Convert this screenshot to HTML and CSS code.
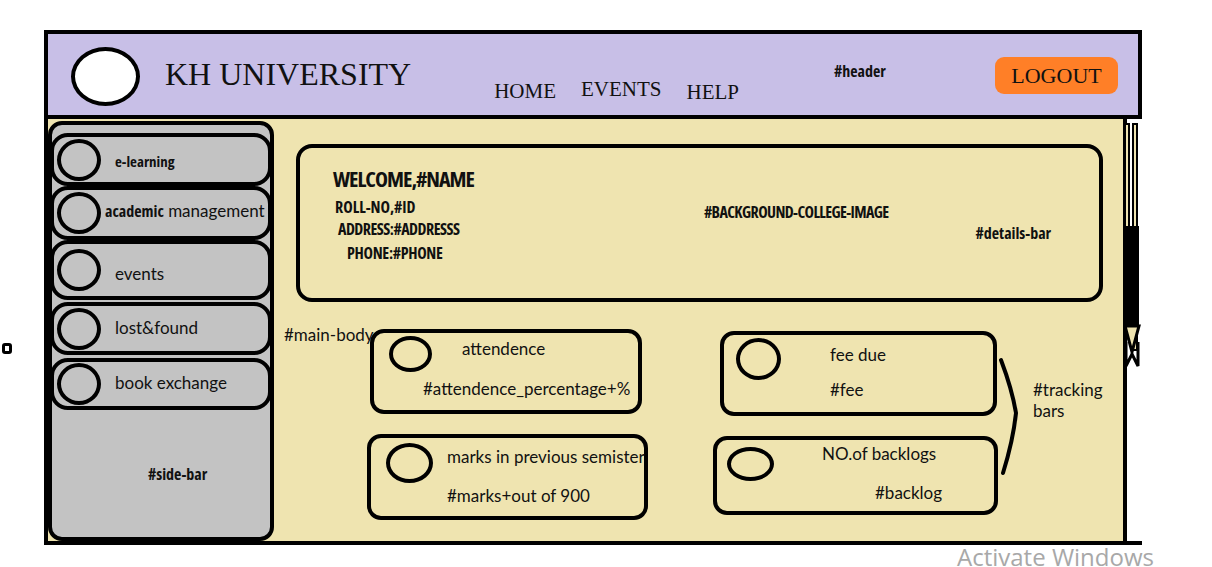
FILE: index.html
```html
<!DOCTYPE html>
<html lang="en">
<head>
  <meta charset="UTF-8">
  <meta name="viewport" content="width=device-width, initial-scale=1.0">
  <title>KH University</title>
  <link rel="stylesheet" href="styles.css">
</head>
<body>
  <div class="frame">
    <header class="header">
      <div class="logo"></div>
      <h1 class="brand">KH UNIVERSITY</h1>
      <nav class="nav">
        <a href="#" class="nav-home">HOME</a>
        <a href="#" class="nav-events">EVENTS</a>
        <a href="#" class="nav-help">HELP</a>
      </nav>
      <span class="tag tag-header">#header</span>
      <button class="logout">LOGOUT</button>
    </header>

    <div class="content">
      <aside class="sidebar">
        <ul class="side-list">
          <li class="side-item side-first"><span class="ring"></span><span class="side-label tag">e-learning</span></li>
          <li class="side-item"><span class="ring"></span><span class="side-label side-wide"><span class="tag">academic</span> management</span></li>
          <li class="side-item side-tall"><span class="ring"></span><span class="side-label">events</span></li>
          <li class="side-item side-lost"><span class="ring"></span><span class="side-label">lost&amp;found</span></li>
          <li class="side-item side-book"><span class="ring"></span><span class="side-label">book exchange</span></li>
        </ul>
        <div class="side-tag"><span class="tag">#side-bar</span></div>
      </aside>

      <main class="main">
        <section class="details">
          <div class="info">
            <div class="tag info-name">WELCOME,#NAME</div>
            <div class="tag info-line info-roll">ROLL-NO,#ID</div>
            <div class="tag info-line info-addr">ADDRESS:#ADDRESSS</div>
            <div class="tag info-line info-phone">PHONE:#PHONE</div>
          </div>
          <div class="tag bg-label">#BACKGROUND-COLLEGE-IMAGE</div>
          <div class="tag details-tag">#details-bar</div>
        </section>

        <section class="tracking">
          <div class="main-tag">#main-body</div>

          <div class="track-col">
            <div class="track-card card-att">
              <div class="track-top"><span class="ring"></span><span class="track-title">attendence</span></div>
              <div class="track-value">#attendence_percentage+%</div>
            </div>
            <div class="track-card card-marks">
              <div class="track-top"><span class="ring"></span><span class="track-title">marks in previous semister</span></div>
              <div class="track-value">#marks+out of 900</div>
            </div>
          </div>

          <div class="track-col track-col-right">
            <div class="track-card card-fee">
              <div class="track-top"><span class="ring"></span><span class="track-title">fee due</span></div>
              <div class="track-value">#fee</div>
            </div>
            <div class="track-card card-back">
              <div class="track-top"><span class="ring"></span><span class="track-title">NO.of backlogs</span></div>
              <div class="track-value">#backlog</div>
            </div>
          </div>

          <svg class="bracket" width="22" height="125" viewBox="0 0 22 125">
            <path d="M3 5 Q14 34 18 58 Q15 86 5 118" fill="none" stroke="#000" stroke-width="4" stroke-linecap="round"/>
          </svg>

          <div class="tracking-tag">#tracking<br>bars</div>
        </section>
      </main>

      <div class="scroll">
        <svg width="17" height="260" viewBox="0 0 17 260">
          <rect x="1" y="4" width="4" height="210" fill="#efe4b0" stroke="#000" stroke-width="2"/>
          <rect x="9" y="4" width="4" height="226" fill="#efe4b0" stroke="#000" stroke-width="2"/>
          <rect x="0" y="106" width="15" height="100" fill="#000"/>
          <polygon points="1,206 15,206 8,232" fill="#efe4b0" stroke="#000" stroke-width="3"/>
          <path d="M2 222 L2 246 L8 234 L14 246 L14 222" fill="none" stroke="#000" stroke-width="3"/>
        </svg>
      </div>
    </div>
  </div>

  <span class="stray-dot"></span>
  <span class="watermark">Activate Windows</span>
</body>
</html>
```

FILE: styles.css
```css
:root {
  --lilac: #c8bfe7;
  --cream: #efe4b0;
  --grey: #c3c3c3;
  --orange: #ff7f27;
  --ink: #111;
  --line: 4px solid #000;
}

* {
  box-sizing: border-box;
}

body {
  margin: 0;
  position: relative;
  width: 1212px;
  height: 567px;
  overflow: hidden;
  background: #fff;
  color: var(--ink);
  font-family: Lato, "Open Sans", sans-serif;
  font-size: 17px;
  line-height: 20px;
}

.tag {
  font-family: "Open Sans", "Noto Sans", sans-serif;
  font-stretch: 75%;
  font-weight: bold;
  font-size: 16px;
  white-space: nowrap;
}

.ring {
  flex: none;
  border: var(--line);
  border-radius: 50%;
}

/* frame */
.frame {
  margin: 30px 0 0 44px;
  width: 1098px;
  height: 515px;
  border: var(--line);
  display: flex;
  flex-direction: column;
}

/* header */
.header {
  flex: none;
  height: 85px;
  display: flex;
  align-items: flex-start;
  padding: 0 20px 0 23px;
  background: var(--lilac);
  border-bottom: var(--line);
}

.logo {
  width: 69px;
  height: 59px;
  margin-top: 13px;
  background: #fff;
  border: var(--line);
  border-radius: 50%;
}

.brand {
  margin: 24px 0 0 25px;
  font-family: "Liberation Serif", serif;
  font-weight: normal;
  font-size: 32px;
  line-height: 32px;
  white-space: nowrap;
}

.nav {
  display: flex;
  align-items: flex-start;
  gap: 25px;
  margin: 47px 0 0 83px;
}

.nav a {
  color: var(--ink);
  text-decoration: none;
  font-family: "Liberation Serif", serif;
  font-size: 21px;
  line-height: 21px;
}

.nav-events {
  margin-top: -2px;
}

.nav-help {
  margin-top: 1px;
}

.tag-header {
  margin: 27px 0 0 95px;
}

.logout {
  margin: 23px 0 0 auto;
  width: 123px;
  height: 37px;
  padding: 0;
  border: none;
  border-radius: 9px;
  background: var(--orange);
  color: var(--ink);
  font-family: "Liberation Serif", serif;
  font-size: 22px;
}

/* body */
.content {
  flex: 1;
  display: grid;
  grid-template-columns: 226px 1fr 21px;
  background: var(--cream);
}

.sidebar {
  margin-top: 2px;
  display: flex;
  flex-direction: column;
  padding-top: 8px;
  background: var(--grey);
  border: var(--line);
  border-radius: 14px;
}

.side-list {
  list-style: none;
  margin: 0 -2px;
  padding: 0;
}

.side-item {
  height: 54px;
  display: flex;
  align-items: center;
  border: var(--line);
  border-radius: 18px;
  background: var(--grey);
}

.side-item .ring {
  width: 44px;
  height: 42px;
  margin-left: 3px;
}

.side-label {
  margin: -2px 0 0 14px;
  white-space: nowrap;
}

.side-label.tag {
  font-size: 15px;
}

.side-first {
  height: 53px;
}

.side-first .side-label {
  margin-top: 3px;
}

.side-wide {
  margin: -4px 0 0 4px;
}

.side-wide .tag {
  font-size: 16px;
}

.side-tall {
  height: 60px;
}

.side-tall .side-label {
  margin-top: 8px;
}

.side-lost {
  height: 53px;
  margin-top: 2px;
}

.side-book {
  height: 52px;
  margin-top: 3px;
}

.side-tag {
  flex: 1;
  display: flex;
  align-items: center;
  padding: 0 0 0 96px;
}

/* main */
.main {
  padding: 25px 20px 0 10px;
}

.details {
  height: 158px;
  margin-left: 12px;
  display: flex;
  align-items: flex-start;
  padding-left: 33px;
  border: var(--line);
  border-radius: 16px;
}

.info {
  width: 371px;
  padding-top: 17px;
}

.info-name {
  font-size: 22px;
  line-height: 26px;
  letter-spacing: -1px;
}

.info-line {
  font-size: 16px;
  line-height: 22px;
}

.info-roll {
  margin: 5px 0 0 2px;
}

.info-addr {
  margin-left: 5px;
  letter-spacing: -0.5px;
}

.info-phone {
  margin: 2px 0 0 14px;
  letter-spacing: -0.3px;
}

.bg-label {
  margin-top: 54px;
  letter-spacing: -0.6px;
}

.details-tag {
  margin: 75px 0 0 87px;
}

/* tracking bars */
.tracking {
  display: flex;
  align-items: flex-start;
  margin-top: 27px;
}

.main-tag {
  width: 86px;
  margin-top: -4px;
  white-space: nowrap;
}

.track-col {
  width: 272px;
  display: flex;
  flex-direction: column;
  gap: 20px;
}

.track-col-right {
  width: 277px;
  margin-left: 78px;
}

.track-card {
  flex: none;
  border: var(--line);
  border-radius: 14px;
  white-space: nowrap;
}

.track-top {
  display: flex;
  align-items: flex-start;
}

.card-att {
  width: 272px;
  height: 85px;
}

.card-att .ring { width: 43px; height: 36px; margin: 3px 0 0 15px; }
.card-att .track-title { margin: 6px 0 0 30px; }
.card-att .track-value { margin: 7px 0 0 49px; }

.card-marks {
  width: 281px;
  height: 86px;
  margin-left: -3px;
}

.card-marks .ring { width: 47px; height: 40px; margin: 5px 0 0 15px; }
.card-marks .track-title { margin: 9px 0 0 14px; }
.card-marks .track-value { margin: 3px 0 0 76px; }

.card-fee {
  width: 277px;
  height: 85px;
  margin-top: 2px;
}

.card-fee .ring { width: 45px; height: 42px; margin: 3px 0 0 12px; }
.card-fee .track-title { margin: 10px 0 0 49px; }
.card-fee .track-value { margin: 0 0 0 106px; }

.card-back {
  width: 285px;
  height: 79px;
  margin-left: -7px;
}

.card-back .ring { width: 47px; height: 34px; margin: 7px 0 0 10px; }
.card-back .track-title { margin: 4px 0 0 48px; }
.card-back .track-value { margin: 2px 0 0 158px; }

.bracket {
  flex: none;
  margin: 26px 0 0 1px;
}

.tracking-tag {
  margin: 50px 0 0 13px;
  line-height: 21px;
}

/* scroll strip */
.scroll {
  background: #fff;
  border-left: var(--line);
  padding-top: 1px;
}

.scroll svg {
  display: block;
  margin-left: -3px;
}

/* screenshot leftovers */
.stray-dot {
  position: absolute;
  left: 2px;
  top: 343px;
  width: 10px;
  height: 11px;
  border: 3px solid #000;
  border-radius: 3px;
  background: #fff;
}

.watermark {
  position: absolute;
  left: 957px;
  top: 540px;
  color: #a8a8a8;
  font-family: "Open Sans", sans-serif;
  font-size: 24px;
  line-height: 34px;
  white-space: nowrap;
}
```
